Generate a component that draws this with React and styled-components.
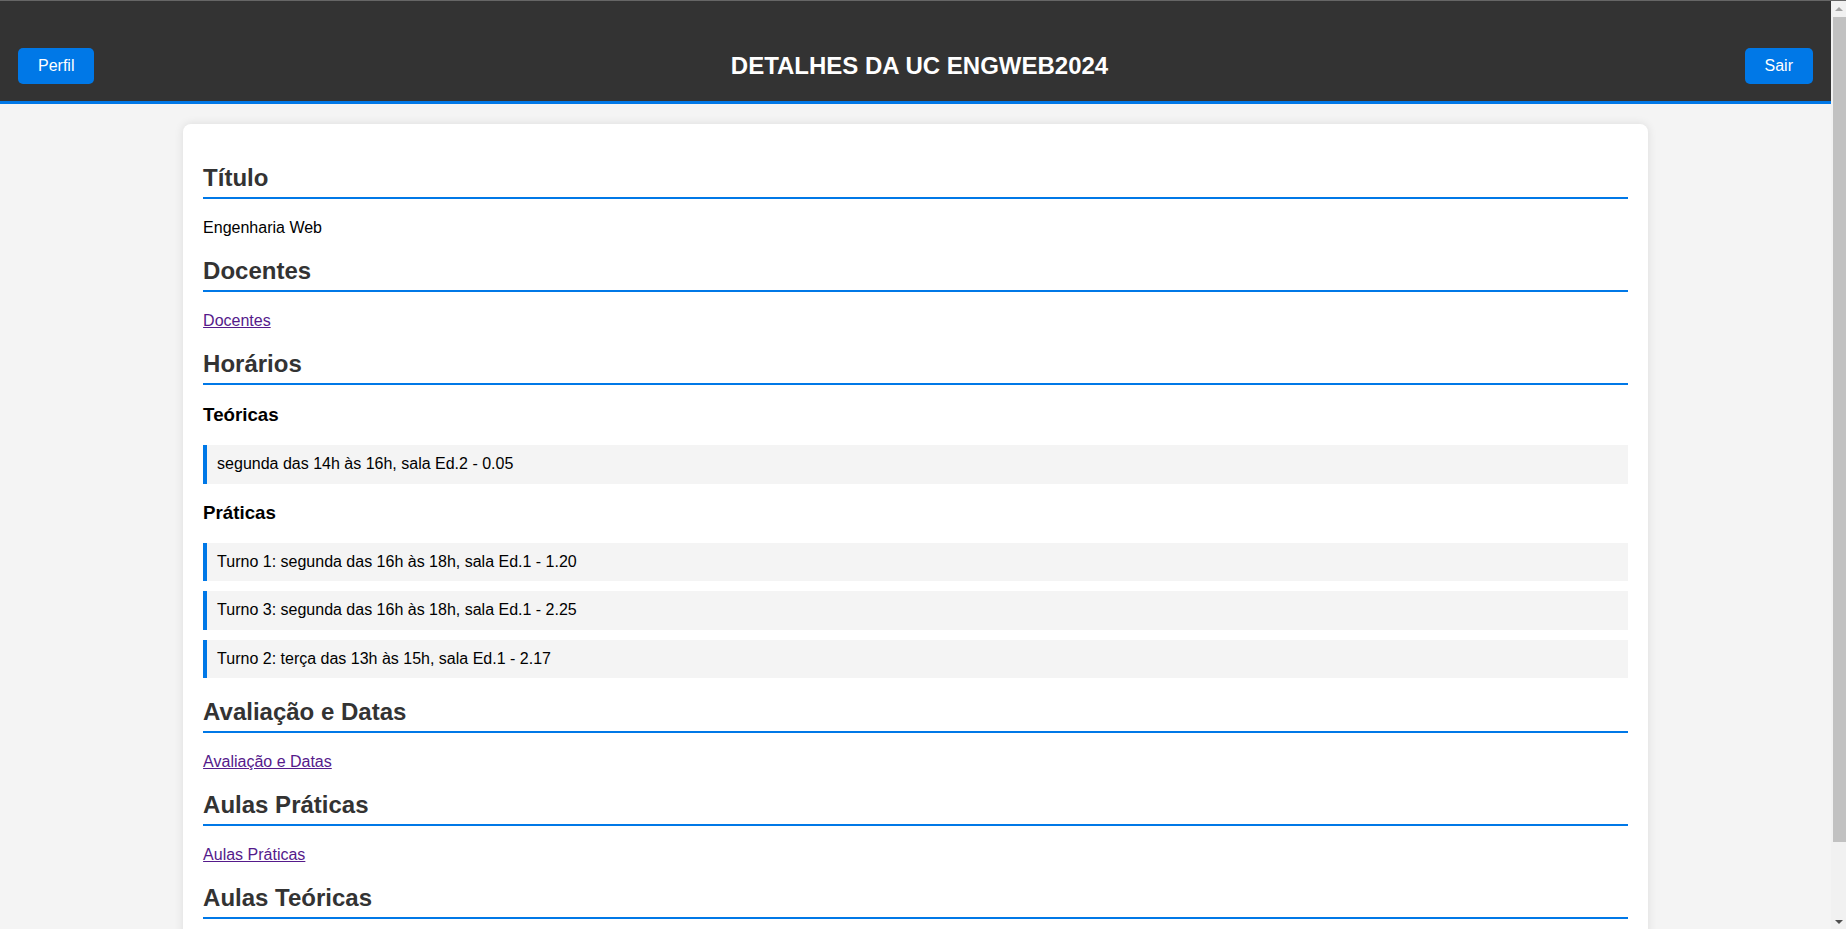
import React from "react";
import styled, { createGlobalStyle } from "styled-components";

const BLUE = "#0078e7";
const SCROLLBAR = 15;

const GlobalStyle = createGlobalStyle`
  html, body {
    margin: 0;
    padding: 0;
  }
  body {
    background: #f4f4f4;
    font-family: "Liberation Sans", Arial, sans-serif;
    font-size: 16px;
    color: #000;
  }
  * { box-sizing: border-box; }
`;

const Page = styled.div`
  width: calc(100vw - ${SCROLLBAR}px);
  overflow: hidden;
`;

const ScrollTrack = styled.div`
  position: fixed;
  top: 0;
  right: 0;
  width: ${SCROLLBAR}px;
  height: 100vh;
  background: #f1f1f1;
  border-top: 1px solid #666;
  display: flex;
  flex-direction: column;
  align-items: stretch;
`;

const ScrollArrow = styled.div`
  height: 15px;
  display: flex;
  align-items: center;
  justify-content: center;
  flex: none;
`;

const Triangle = styled.span`
  width: 0;
  height: 0;
  border-left: 4px solid transparent;
  border-right: 4px solid transparent;
  ${(p) =>
    p.$down
      ? "border-top: 4px solid #505050;"
      : "border-bottom: 4px solid #a3a3a3;"}
`;

const ScrollThumbArea = styled.div`
  flex: 1;
  padding: 1px 0 0 2px;
`;

const ScrollThumb = styled.div`
  height: 92%;
  background: #c1c1c1;
`;

const Header = styled.header`
  display: flex;
  justify-content: space-between;
  align-items: center;
  background: #333;
  border-top: 1px solid #666;
  border-bottom: 3px solid ${BLUE};
  padding: 47px 18px 17px;
`;

const HeaderTitle = styled.h1`
  margin: 0;
  color: #fff;
  font-size: 24px;
  font-weight: bold;
  line-height: 1.15;
`;

const Button = styled.button`
  background: ${BLUE};
  color: #fff;
  border: none;
  border-radius: 5px;
  padding: 9px 20px;
  font-family: "Liberation Sans", Arial, sans-serif;
  font-size: 16px;
  line-height: 18px;
  cursor: pointer;
`;

const Card = styled.main`
  width: 80%;
  margin: 20px auto;
  background: #fff;
  border-radius: 8px;
  box-shadow: 0 0 10px rgba(0, 0, 0, 0.1);
  padding: 20px;
  display: flow-root;
`;

const SectionTitle = styled.h2`
  color: #333;
  font-size: 24px;
  font-weight: bold;
  margin: 19.92px 0;
  padding-bottom: 5px;
  border-bottom: 2px solid ${BLUE};
`;

const Text = styled.p`
  margin: 16px 0;
`;

const Link = styled.a`
  color: #551a8b;
  text-decoration: underline;
`;

const SubTitle = styled.h3`
  font-size: 18.72px;
  font-weight: bold;
  margin: 18.72px 0;
  color: #000;
`;

const Slot = styled.div`
  background: #f4f4f4;
  border-left: 4px solid ${BLUE};
  padding: 10px;
  margin: 10px 0;
  line-height: 18.4px;
`;

const sections = [
  { title: "Avaliação e Datas" },
  { title: "Aulas Práticas" },
  { title: "Aulas Teóricas" },
];

export default function App() {
  return (
    <>
      <GlobalStyle />
      <Page>
        <Header>
          <Button>Perfil</Button>
          <HeaderTitle>DETALHES DA UC ENGWEB2024</HeaderTitle>
          <Button>Sair</Button>
        </Header>
        <Card>
          <SectionTitle>Título</SectionTitle>
          <Text>Engenharia Web</Text>

          <SectionTitle>Docentes</SectionTitle>
          <Text>
            <Link href="#docentes">Docentes</Link>
          </Text>

          <SectionTitle>Horários</SectionTitle>
          <SubTitle>Teóricas</SubTitle>
          <Slot>segunda das 14h às 16h, sala Ed.2 - 0.05</Slot>
          <SubTitle>Práticas</SubTitle>
          <Slot>Turno 1: segunda das 16h às 18h, sala Ed.1 - 1.20</Slot>
          <Slot>Turno 3: segunda das 16h às 18h, sala Ed.1 - 2.25</Slot>
          <Slot>Turno 2: terça das 13h às 15h, sala Ed.1 - 2.17</Slot>

          {sections.map((s) => (
            <React.Fragment key={s.title}>
              <SectionTitle>{s.title}</SectionTitle>
              <Text>
                <Link href={"#" + s.title}>{s.title}</Link>
              </Text>
            </React.Fragment>
          ))}
        </Card>
      </Page>
      <ScrollTrack aria-hidden="true">
        <ScrollArrow>
          <Triangle />
        </ScrollArrow>
        <ScrollThumbArea>
          <ScrollThumb />
        </ScrollThumbArea>
        <ScrollArrow>
          <Triangle $down />
        </ScrollArrow>
      </ScrollTrack>
    </>
  );
}
